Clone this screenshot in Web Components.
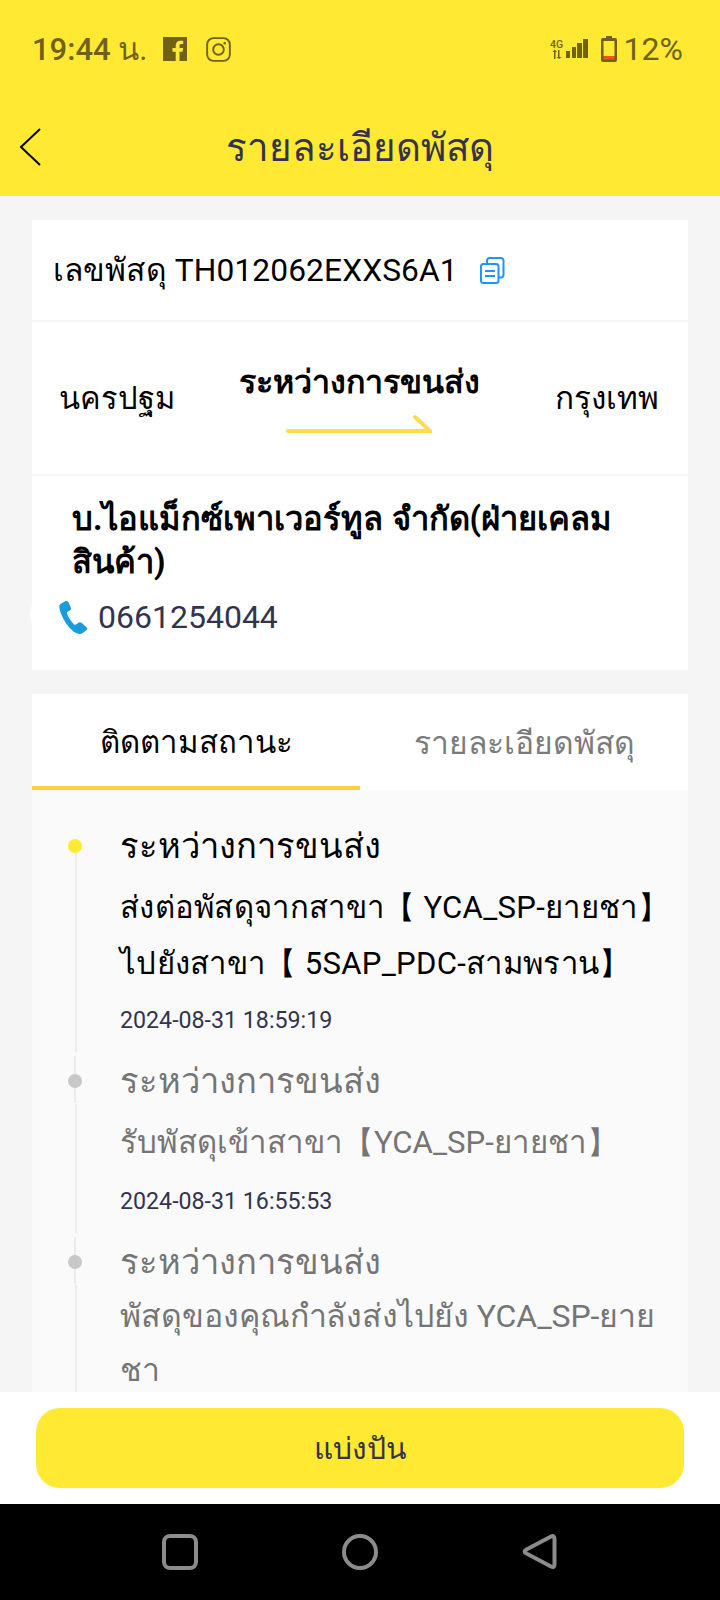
<!DOCTYPE html>
<html lang="th">
<head>
<meta charset="utf-8">
<title>รายละเอียดพัสดุ</title>
<style>
  html, body { margin: 0; padding: 0; height: 1600px; overflow: hidden; }
  body {
    display: flex;
    flex-direction: column;
    background: #f5f5f5;
    font-family: Roboto, "Noto Sans", "DejaVu Sans", sans-serif;
    color: #000;
  }
  .main { flex: 1; min-height: 0; overflow: hidden; display: flex; flex-direction: column; padding: 24px 32px 0; }
</style>
</head>
<body>
  <top-header title-text="รายละเอียดพัสดุ"></top-header>
  <div class="main">
    <parcel-number code="TH012062EXXS6A1"></parcel-number>
    <route-card from="นครปฐม" to="กรุงเทพ" status="ระหว่างการขนส่ง"></route-card>
    <contact-card name="บ.ไอแม็กซ์เพาเวอร์ทูล จำกัด(ฝ่ายเคลม สินค้า)" phone="0661254044"></contact-card>
    <track-tabs></track-tabs>
    <track-list>
      <track-item active style="--desc-size: 31.100px; --desc-ls: .3px" title-text="ระหว่างการขนส่ง" time="2024-08-31 18:59:19">ส่งต่อพัสดุจากสาขา【 YCA_SP-ยายชา】<br>ไปยังสาขา【 5SAP_PDC-สามพราน】</track-item>
      <track-item style="--time-gap: 2px; --desc-size: 31.200px" title-text="ระหว่างการขนส่ง" time="2024-08-31 16:55:53">รับพัสดุเข้าสาขา【YCA_SP-ยายชา】</track-item>
      <track-item style="--desc-lh: 40px; --desc-size: 32px; --desc-ls: -.06px" title-text="ระหว่างการขนส่ง" time="">
        <div style="margin-top: 3px">พัสดุของคุณกำลังส่งไปยัง YCA_SP-ยาย</div>
        <div style="margin-top: 14px">ชา</div>
      </track-item>
    </track-list>
  </div>
  <share-footer>แบ่งปัน</share-footer>
  <nav-keys></nav-keys>

<script>
class TopHeader extends HTMLElement {
  constructor () {
    super()
    this.shadowDOM = this.attachShadow({ mode: 'open' })
  }

  connectedCallback () {
    this.shadowDOM.innerHTML = `
      <style>
        :host { display: block; height: 196px; background: #ffe933; flex: none; }
        .status {
          height: 98px;
          padding: 0 37px 0 32px;
          display: flex;
          align-items: center;
          color: #6f6216;
          font-size: 31px;
          font-weight: 500;
        }
        .status .t { margin-right: 15px; }
        .status .t i { font-style: normal; font-weight: 400; }
        .fb { margin-right: 19px; }
        .right { margin-left: auto; display: flex; align-items: center; }
        .batt { margin-left: 13px; }
        .pct { font-weight: 400; font-size: 32px; margin-left: 7px; }
        svg { display: block; }
        .bar {
          height: 98px;
          position: relative;
          display: flex;
          align-items: center;
          justify-content: center;
          color: #33334d;
          font-size: 38.500px;
        }
        .back { position: absolute; left: 18px; top: 30px; }
      </style>
      <div class="status">
        <span class="t">19:44 <i>น.</i></span>
        <svg class="fb" width="24" height="24" viewBox="0 0 24 24"><path fill="#6f6216" d="M0 0h24v24H0z"/><path fill="#ffe933" d="M16.500 24v-9.300h3.100l.500-3.600h-3.600V8.800c0-1 .3-1.800 1.800-1.800h1.900V3.800c-.3 0-1.500-.1-2.800-.1-2.800 0-4.700 1.700-4.700 4.800v2.600H9.500v3.600h3.200V24z"/></svg>
        <svg width="25" height="25" viewBox="0 0 26 26" fill="none" stroke="#6f6216" stroke-width="2"><rect x="1.200" y="1.200" width="23.600" height="23.600" rx="6.500"/><circle cx="13" cy="13" r="5.500"/><circle cx="19.500" cy="6.500" r="1.300" fill="#6f6216" stroke="none"/></svg>
        <div class="right">
          <svg width="38" height="20" viewBox="0 0 38 20">
            <text x="0" y="9" font-family="Roboto" font-size="10.500" font-weight="500" fill="#6f6216">4G</text>
            <path fill="#6f6216" d="M4 12h1.500v8H4zM2.500 13 4.700 10.500 7 13zM8 11h1.500v8H8zM6.500 18h5l-2.500 2zM16 12h4v7h-4zM22 8h4v11h-4zM27 4h5v15h-5zM33 0h5v19h-5z"/>
          </svg>
          <svg class="batt" width="16" height="26" viewBox="0 0 16 26">
            <path fill="#6f6216" d="M5 0h6v2h3a2 2 0 0 1 2 2v20a2 2 0 0 1-2 2H2a2 2 0 0 1-2-2V4a2 2 0 0 1 2-2h3z"/>
            <path fill="#ffe933" d="M2.500 5h11v15h-11z"/>
            <path fill="#f0531c" d="M2.500 20h11v3.500h-11z"/>
          </svg>
          <span class="pct">12%</span>
        </div>
      </div>
      <div class="bar">
        <svg class="back" width="24" height="38" viewBox="0 0 24 38" fill="none" stroke="#000" stroke-width="2"><path d="M22 1 3 19l19 18"/></svg>
        <span>${this.getAttribute('title-text')}</span>
      </div>`
  }
}

class ParcelNumber extends HTMLElement {
  constructor () {
    super()
    this.shadowDOM = this.attachShadow({ mode: 'open' })
  }

  connectedCallback () {
    this.shadowDOM.innerHTML = `
      <style>
        :host {
          display: flex;
          flex: none;
          height: 100px;
          align-items: center;
          padding-left: 21px;
          background: #fff;
          font-size: 31.700px;
          letter-spacing: .12px;
          margin-bottom: 2px;
        }
        svg { margin-left: 22px; display: block; }
      </style>
      <span>เลขพัสดุ ${this.getAttribute('code')}</span>
      <svg width="25" height="27" viewBox="0 0 25 27" fill="none" stroke="#1e96ff" stroke-width="2">
        <rect x="1" y="7" width="17.500" height="19" rx="2.500"/>
        <path d="M7 6V3.500A2.500 2.500 0 0 1 9.500 1h11.500A2.500 2.500 0 0 1 23.500 3.500V18a2.500 2.500 0 0 1-2.500 2.500h-2"/>
        <path d="M5 14h10M5 19h10"/>
      </svg>`
  }
}

class RouteCard extends HTMLElement {
  constructor () {
    super()
    this.shadowDOM = this.attachShadow({ mode: 'open' })
  }

  connectedCallback () {
    this.shadowDOM.innerHTML = `
      <style>
        :host {
          display: flex;
          flex: none;
          height: 152px;
          align-items: center;
          justify-content: space-between;
          padding: 0 29px 0 27px;
          background: #fff;
          font-size: 31.500px;
          margin-bottom: 2px;
        }
        .from { font-size: 30.800px; }
        .mid { display: flex; flex-direction: column; align-items: center; gap: 9px; margin: -3px 12px 0 0; }
        b { font-size: 32.200px; line-height: 46px; }
        svg { display: block; }
      </style>
      <span class="from">${this.getAttribute('from')}</span>
      <div class="mid">
        <b>${this.getAttribute('status')}</b>
        <svg width="146" height="20" viewBox="0 0 146 20" fill="none" stroke-width="4" stroke-linecap="round" stroke="#ffdb4d"><path d="M2 17h142L129 3"/></svg>
      </div>
      <span>${this.getAttribute('to')}</span>`
  }
}

class ContactCard extends HTMLElement {
  constructor () {
    super()
    this.shadowDOM = this.attachShadow({ mode: 'open' })
  }

  connectedCallback () {
    const name = this.getAttribute('name')
    this.shadowDOM.innerHTML = `
      <style>
        :host {
          display: block;
          flex: none;
          position: relative;
          height: 194px;
          box-sizing: border-box;
          padding: 22px 40px 0;
          background: #fff;
          margin-bottom: 24px;
        }
        .name { font-size: 32.700px; font-weight: 700; line-height: 43px; }
        .phone { display: flex; align-items: center; color: #33334d; font-size: 32px; margin: 14px 0 0 -14px; position: relative; gap: 9px; }
        .bump { position: absolute; left: -2px; top: 114px; width: 50px; height: 50px; border-radius: 50%; background: #fff; }
        svg { display: block; }
      </style>
      <div class="bump"></div>
      <div class="name">${name}</div>
      <div class="phone">
        <svg width="31" height="33" viewBox="0 0 30 34"><path fill="#1a9bdc" d="M6 .5 1.500 3C-.5 4.500.5 9 2.500 14c3 7.500 7 13 12.500 17.500 4 3 7.500 3 9.500 1.500l4-3c1-1 .8-2-.2-3l-5-4.500c-1-.8-2-.8-3-.2l-2.800 2c-.8.500-1.500.3-2.200-.3-3-3-5.500-7-7-11-.3-1 0-1.600.6-2l2.600-1.500c1-.7 1.200-1.500.8-2.600L10 1.500C9.300.2 7.500-.4 6 .5z"/></svg>
        <span>${this.getAttribute('phone')}</span>
      </div>`
  }
}

class TrackTabs extends HTMLElement {
  constructor () {
    super()
    this.shadowDOM = this.attachShadow({ mode: 'open' })
  }

  connectedCallback () {
    this.shadowDOM.innerHTML = `
      <style>
        :host { display: grid; flex: none; grid-template-columns: 1fr 1fr; height: 96px; background: #fff; font-size: 31.800px; }
        div { display: flex; align-items: center; justify-content: center; box-sizing: border-box; padding-top: 4px; border-bottom: 4px solid transparent; }
        .on { border-bottom-color: #ffcf40; color: #000; font-size: 31.200px; }
        .off { color: #7b7b7b; }
      </style>
      <div class="on">ติดตามสถานะ</div>
      <div class="off">รายละเอียดพัสดุ</div>`
  }
}

class TrackList extends HTMLElement {
  constructor () {
    super()
    this.attachShadow({ mode: 'open' }).innerHTML = `
      <style>
        :host { display: block; flex: 1; min-height: 0; overflow: hidden; background: #fafafa; padding: 30px 0 0 36px; }
      </style>
      <slot></slot>`
  }
}

class TrackItem extends HTMLElement {
  constructor () {
    super()
    this.shadowDOM = this.attachShadow({ mode: 'open' })
  }

  connectedCallback () {
    const active = this.hasAttribute('active')
    const time = this.getAttribute('time')
    this.shadowDOM.innerHTML = `
      <style>
        :host {
          display: grid;
          grid-template-columns: 14px 1fr;
          column-gap: 38px;
          padding-bottom: 7px;
          white-space: nowrap;
          color: ${active ? '#000' : '#757575'};
        }
        .rail { position: relative; margin-bottom: -7px; }
        .long { position: absolute; left: 7px; width: 2px; top: ${active ? 33 : 49}px; bottom: 3px; background: #ececec; }
        .short { position: absolute; left: 6px; width: 2px; top: 1px; height: 47px; background: #ececec; }
        .dot { position: absolute; left: 0; top: 19px; width: 14px; height: 14px; border-radius: 50%; background: ${active ? '#ffe933' : '#c8c8c8'}; }
        .title { font-size: 34.500px; line-height: 52px; margin-bottom: 8px; }
        .desc { font-size: var(--desc-size, 31px); line-height: var(--desc-lh, 56px); letter-spacing: var(--desc-ls, 0); }
        .time { font-size: 23.200px; line-height: 56px; margin-top: var(--time-gap, 0); color: #33334d; }
      </style>
      <div class="rail">
        ${active ? '' : '<div class="short"></div>'}
        <div class="long"></div>
        <div class="dot"></div>
      </div>
      <div>
        <div class="title">${this.getAttribute('title-text')}</div>
        <div class="desc"><slot></slot></div>
        ${time ? `<div class="time">${time}</div>` : ''}
      </div>`
  }
}

class ShareFooter extends HTMLElement {
  constructor () {
    super()
    this.attachShadow({ mode: 'open' }).innerHTML = `
      <style>
        :host { display: block; flex: none; background: #fff; padding: 16px 36px; }
        button {
          display: block;
          width: 100%;
          height: 80px;
          border: 0;
          border-radius: 24px;
          background: #ffe933;
          color: #33334d;
          font: 30px Roboto, "Noto Sans", sans-serif;
        }
      </style>
      <button><slot></slot></button>`
  }
}

class NavKeys extends HTMLElement {
  constructor () {
    super()
    this.attachShadow({ mode: 'open' }).innerHTML = `
      <style>
        :host { display: flex; flex: none; height: 96px; background: #000; align-items: center; justify-content: center; gap: 144px; }
        svg { display: block; }
      </style>
      <svg width="36" height="36" viewBox="0 0 36 36" fill="none" stroke="#8c8c8c" stroke-width="4"><rect x="2" y="2" width="32" height="32" rx="6"/></svg>
      <svg width="36" height="36" viewBox="0 0 36 36" fill="none" stroke="#8c8c8c" stroke-width="4"><circle cx="18" cy="18" r="16"/></svg>
      <svg width="36" height="38" viewBox="0 0 36 38" fill="none" stroke="#8c8c8c" stroke-width="4" stroke-linejoin="round"><path d="M29 3.600Q32.500 1.800 32.500 6V31Q32.500 35.500 29 33.400L4.500 20.500Q.5 18.500 4.500 16.500Z"/></svg>`
  }
}

customElements.define('top-header', TopHeader)
customElements.define('parcel-number', ParcelNumber)
customElements.define('route-card', RouteCard)
customElements.define('contact-card', ContactCard)
customElements.define('track-tabs', TrackTabs)
customElements.define('track-list', TrackList)
customElements.define('track-item', TrackItem)
customElements.define('share-footer', ShareFooter)
customElements.define('nav-keys', NavKeys)
</script>
</body>
</html>
